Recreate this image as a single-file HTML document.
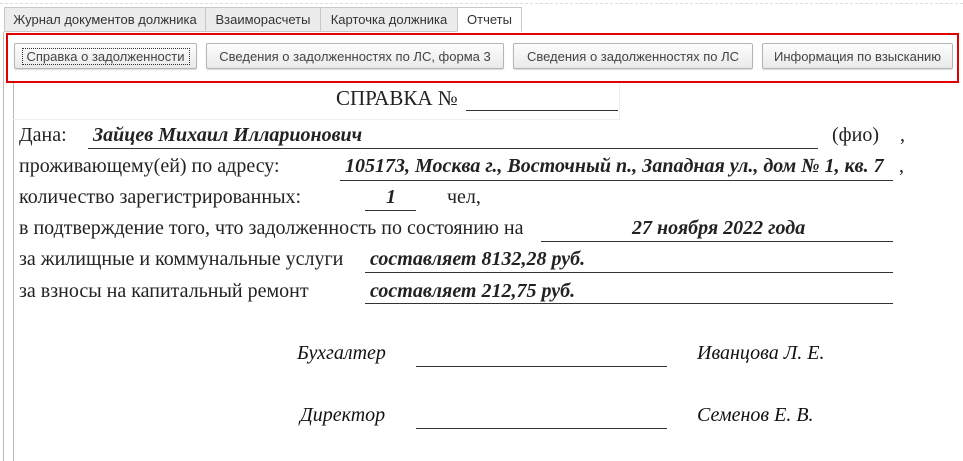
<!DOCTYPE html>
<html><head><meta charset="utf-8"><style>
*{margin:0;padding:0;box-sizing:border-box}
body{width:963px;height:461px;background:#fff;position:relative;overflow:hidden;font-family:"Liberation Serif",serif;color:#333}
.a{position:absolute;white-space:nowrap}
.tab{position:absolute;top:7px;height:25px;border:1px solid #c8c8c8;background:#ececec;font:13px "Liberation Sans",sans-serif;color:#333;padding-top:4px;text-align:center}
.btn{position:absolute;top:43px;height:26px;border:1px solid #b5b5b5;border-radius:2px;background:linear-gradient(#fdfdfd,#e9e9e9);box-shadow:0 1px 1px rgba(0,0,0,.15);font:13px "Liberation Sans",sans-serif;color:#444;text-align:center;padding-top:5px}
.t{font-size:20px;color:#222}
.v{font-size:20px;font-weight:bold;font-style:italic;color:#222}
.l{position:absolute;height:1px;background:#333}
.i{font-size:20px;font-style:italic;color:#111}
</style></head><body>
<div class="a" style="left:0;top:3px;width:963px;border-top:1px dashed #ddd"></div>
<div class="tab" style="left:4px;width:202px">Журнал документов должника</div>
<div class="tab" style="left:205px;width:116px">Взаиморасчеты</div>
<div class="tab" style="left:320px;width:138px">Карточка должника</div>
<div class="tab" style="left:457px;width:65px;background:#fff;border-bottom-color:#fff">Отчеты</div>
<div class="a" style="left:3px;top:32px;width:1px;height:429px;background:#bbb"></div>
<div class="a" style="left:13px;top:82px;width:1px;height:379px;background:#bbb"></div>
<div class="a" style="left:13px;top:82px;width:607px;height:38px;border:1px solid #eee;border-left:none"></div>
<div class="a" style="left:6px;top:33px;width:953px;height:50px;border:2px solid #e00000"></div>
<div class="btn" style="left:14px;width:183px"><span style="outline:1px dotted #333;padding:0 4px">Справка о задолженности</span></div>
<div class="btn" style="left:206px;width:298px">Сведения о задолженностях по ЛС, форма 3</div>
<div class="btn" style="left:513px;width:240px">Сведения о задолженностях по ЛС</div>
<div class="btn" style="left:762px;width:191px">Информация по взысканию</div>
<div class="a" style="left:336px;top:86px;font-size:21px;color:#222">СПРАВКА №</div>
<div class="l" style="left:466px;top:110px;width:152px"></div>

<div class="a t" style="left:19px;top:124px">Дана:</div>
<div class="a v" style="left:93px;top:124px">Зайцев Михаил Илларионович</div>
<div class="l" style="left:88px;top:148px;width:730px"></div>
<div class="a t" style="left:832px;top:124px">(фио)</div>
<div class="a t" style="left:900px;top:124px">,</div>

<div class="a t" style="left:19px;top:155px">проживающему(ей) по адресу:</div>
<div class="a v" style="left:345px;top:155px">105173, Москва г., Восточный п., Западная ул., дом № 1, кв. 7</div>
<div class="l" style="left:340px;top:180px;width:553px"></div>
<div class="a t" style="left:899px;top:155px">,</div>

<div class="a t" style="left:19px;top:186px">количество зарегистрированных:</div>
<div class="a v" style="left:386px;top:186px">1</div>
<div class="l" style="left:365px;top:210px;width:51px"></div>
<div class="a t" style="left:447px;top:186px">чел,</div>

<div class="a t" style="left:19px;top:217px">в подтверждение того, что задолженность по состоянию на</div>
<div class="a v" style="left:632px;top:217px">27 ноября 2022 года</div>
<div class="l" style="left:541px;top:241px;width:352px"></div>

<div class="a t" style="left:19px;top:248px">за жилищные и коммунальные услуги</div>
<div class="a v" style="left:370px;top:248px">составляет 8132,28 руб.</div>
<div class="l" style="left:365px;top:272px;width:528px"></div>

<div class="a t" style="left:19px;top:280px">за взносы на капитальный ремонт</div>
<div class="a v" style="left:370px;top:280px">составляет 212,75 руб.</div>
<div class="l" style="left:365px;top:303px;width:528px"></div>

<div class="a i" style="left:297px;top:342px">Бухгалтер</div>
<div class="l" style="left:416px;top:366px;width:251px"></div>
<div class="a i" style="left:697px;top:342px">Иванцова Л. Е.</div>
<div class="a i" style="left:300px;top:404px">Директор</div>
<div class="l" style="left:416px;top:428px;width:251px"></div>
<div class="a i" style="left:697px;top:404px">Семенов Е. В.</div>
</body></html>
